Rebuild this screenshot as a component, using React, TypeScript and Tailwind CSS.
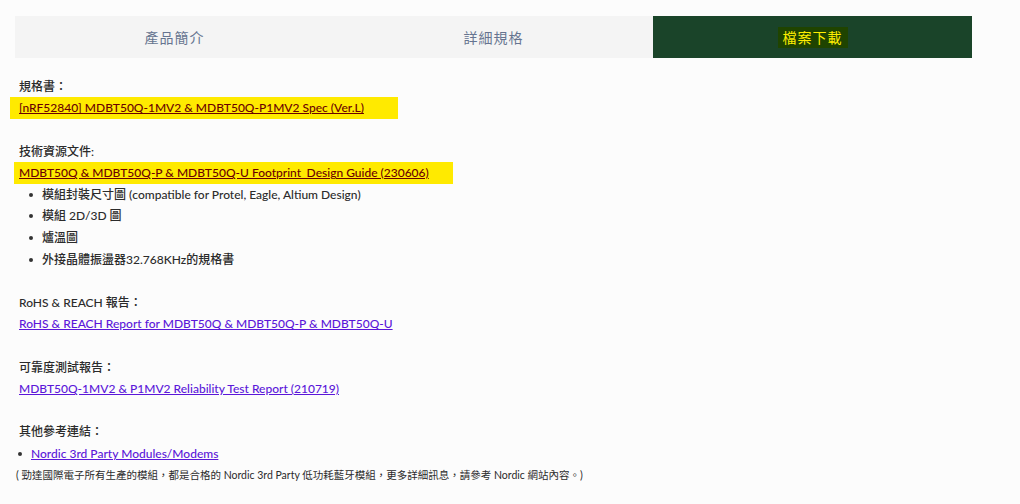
import React from 'react'

const tabs = ['產品簡介', '詳細規格', '檔案下載']

const Bullet: React.FC<{ children: React.ReactNode; indent?: string }> = ({ children, indent = 'pl-[10px]' }) => (
  <div className={`flex items-center h-[21.6px] ${indent}`}>
    <span className="w-[4px] h-[4px] rounded-full bg-[#333] mr-[9px] shrink-0" />
    <span>{children}</span>
  </div>
)

const Line: React.FC<{ children?: React.ReactNode }> = ({ children }) => (
  <div className="h-[21.6px] flex items-center whitespace-nowrap">{children}</div>
)

export default function App() {
  return (
    <div
      className="min-h-screen bg-[#fcfcfc] pt-4 px-[15px] text-[12px] font-medium text-[#2b2b2b]"
      style={{ fontFamily: 'Lato, "Noto Sans CJK TC", sans-serif' }}
    >
      {/* Tabs */}
      <div className="flex w-[957px] h-[42px] font-normal">
        {tabs.map((t, i) =>
          i === 2 ? (
            <div key={t} className="flex-1 bg-[#1a4429] flex items-center justify-center">
              <span
                className="bg-[#1f4400] text-[#ffee00] text-[14px] tracking-[1px] px-[5px] h-[21px] flex items-center"
                style={{ fontFamily: '"Noto Sans CJK TC", sans-serif' }}
              >
                {t}
              </span>
            </div>
          ) : (
            <div
              key={t}
              className="flex-1 bg-[#f4f4f4] flex items-center justify-center text-[14px] tracking-[1px] text-[#667490]"
              style={{ fontFamily: '"Noto Sans CJK TC", sans-serif' }}
            >
              {t}
            </div>
          )
        )}
      </div>

      {/* Content */}
      <div className="pt-[18px] px-[4px]">
        <Line>規格書：</Line>
        <div className="h-[21.6px] flex items-center -ml-[9px] whitespace-nowrap">
          <a className="inline-flex items-center h-[22px] w-[388px] pl-[9px] bg-[#ffea00] text-[#6b0000] underline">
            [nRF52840] MDBT50Q-1MV2 &amp; MDBT50Q-P1MV2 Spec (Ver.L)
          </a>
        </div>
        <Line />
        <Line>技術資源文件:</Line>
        <div className="h-[21.6px] flex items-center -ml-[5px] whitespace-nowrap">
          <a className="inline-flex items-center h-[22px] w-[439px] pl-[5px] bg-[#ffea00] text-[#6b0000] underline">
            MDBT50Q &amp; MDBT50Q-P &amp; MDBT50Q-U Footprint_Design Guide (230606)
          </a>
        </div>
        <Bullet>模組封裝尺寸圖 (compatible for Protel, Eagle, Altium Design)</Bullet>
        <Bullet>模組 2D/3D 圖</Bullet>
        <Bullet>爐溫圖</Bullet>
        <Bullet>外接晶體振盪器32.768KHz的規格書</Bullet>
        <Line />
        <Line>RoHS &amp; REACH 報告：</Line>
        <Line>
          <a className="text-[#5b17d9] underline">RoHS &amp; REACH Report for MDBT50Q &amp; MDBT50Q-P &amp; MDBT50Q-U</a>
        </Line>
        <Line />
        <Line>可靠度測試報告：</Line>
        <Line>
          <a className="text-[#5b17d9] underline">MDBT50Q-1MV2 &amp; P1MV2 Reliability Test Report (210719)</a>
        </Line>
        <Line />
        <Line>其他參考連結：</Line>
        <Bullet indent="-ml-[1px]">
          <a className="text-[#5b17d9] underline">Nordic 3rd Party Modules/Modems</a>
        </Bullet>
        <div className="h-[21.6px] flex items-center text-[10.5px] font-normal -ml-[3px] whitespace-nowrap">
          ( 勁達國際電子所有生產的模組，都是合格的 Nordic 3rd Party 低功耗藍牙模組，更多詳細訊息，請參考 Nordic 網站內容。)
        </div>
      </div>
    </div>
  )
}
